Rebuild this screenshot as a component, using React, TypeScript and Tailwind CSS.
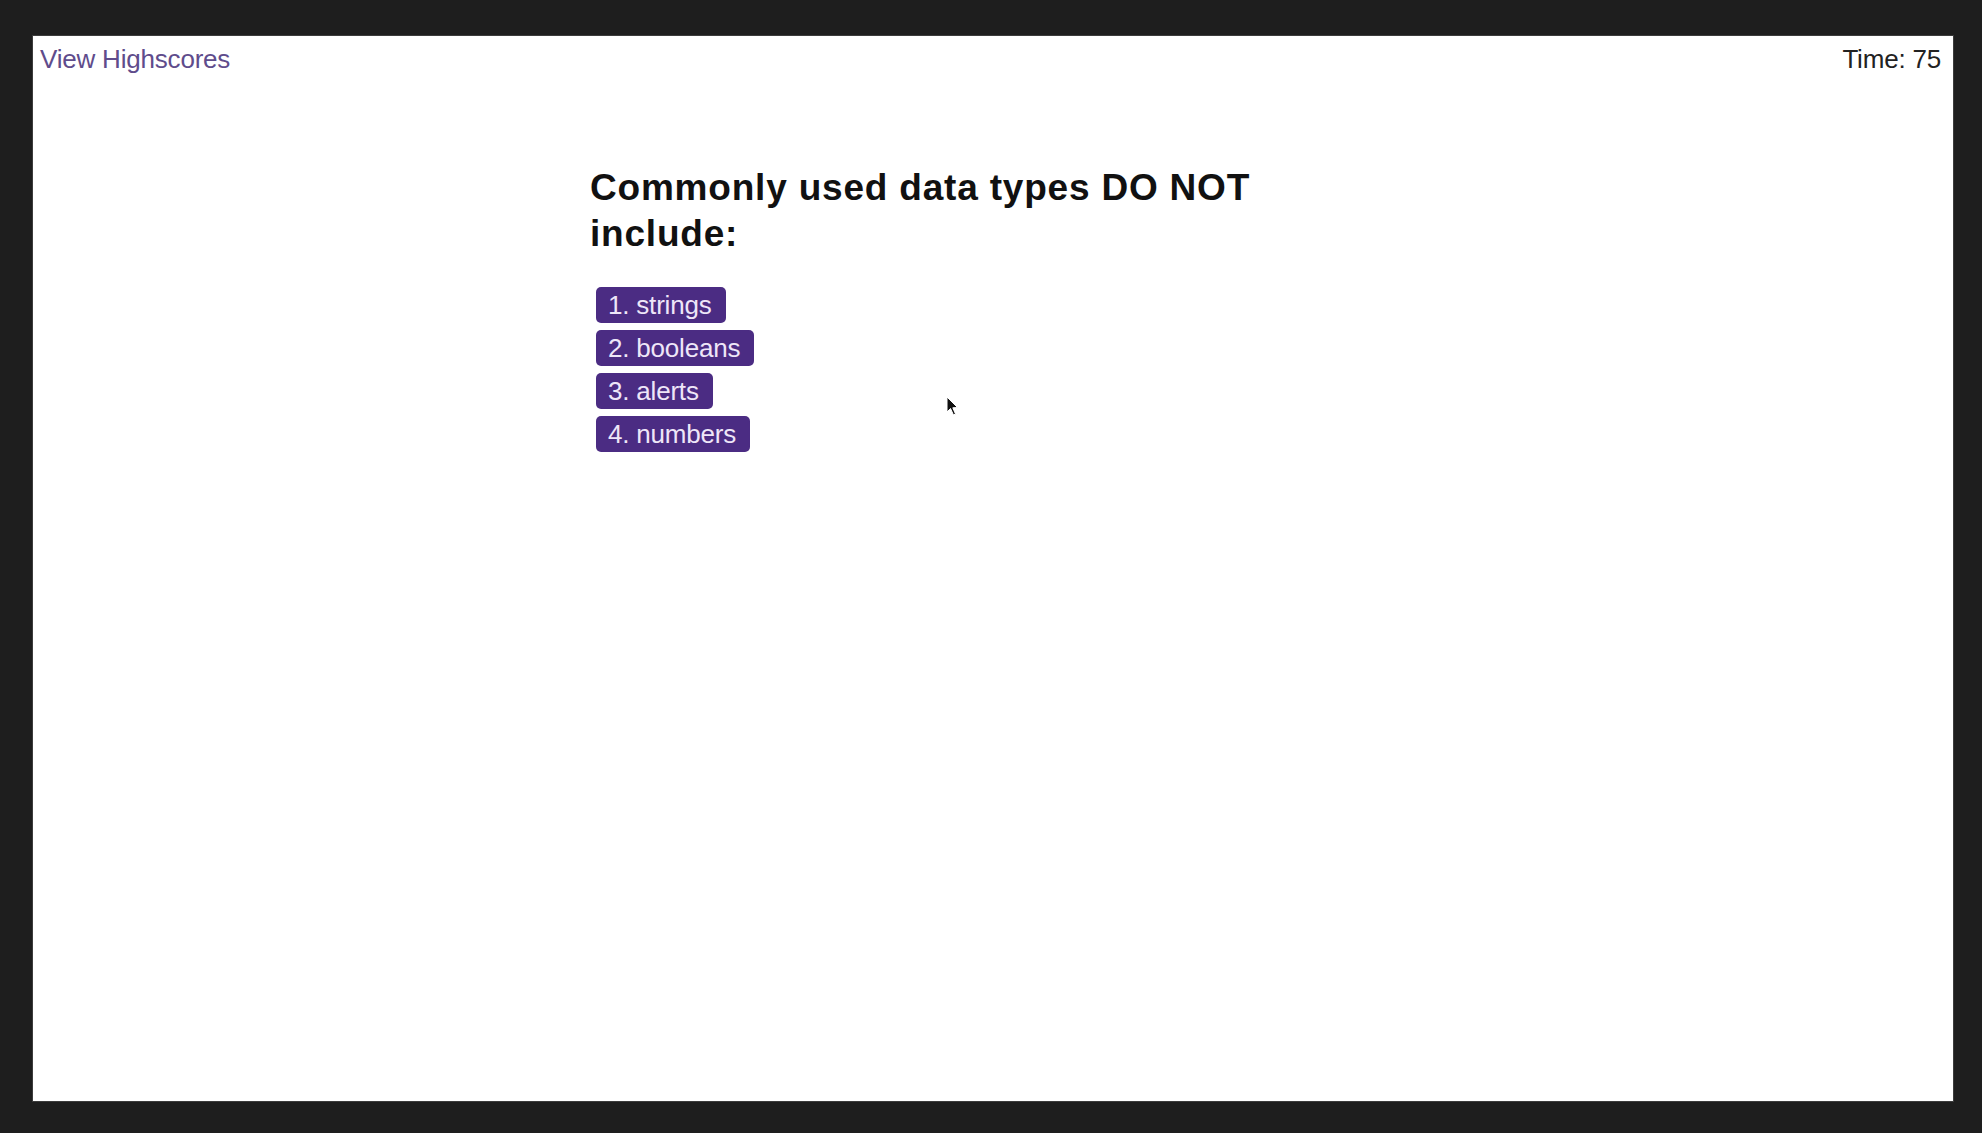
import React from "react";

const choices = ["1. strings", "2. booleans", "3. alerts", "4. numbers"];

const Cursor = () => (
  <svg
    className="absolute left-[913px] top-[360px]"
    width="14"
    height="21"
    viewBox="0 0 14 21"
  >
    <path
      d="M1 1 L1 16 L4.5 12.5 L7.5 19 L9.5 18 L6.8 11.8 L11.5 11.5 Z"
      fill="#111"
      stroke="#fff"
      strokeWidth="1"
    />
  </svg>
);

const App: React.FC = () => {
  return (
    <div
      className="h-[1133px] w-full bg-[#1e1e1e] pl-[32px] pt-[35px] pr-[28px] pb-[31px]"
      style={{ fontFamily: "'Liberation Sans', Arial, sans-serif" }}
    >
      <div className="relative h-full border border-[#3c3c3c] bg-white">
        <header className="flex items-start justify-between pl-[7px] pr-[12px] pt-[8px]">
          <a className="text-[26px] leading-[30px] text-[#5f4c8c] tracking-[-0.2px] cursor-pointer">
            View Highscores
          </a>
          <p className="text-[26px] leading-[30px] text-[#222] tracking-[-0.2px]">
            Time: 75
          </p>
        </header>

        <main className="pl-[557px] pt-[91px]">
          <h1 className="w-[720px] text-[37px] font-bold leading-[46px] text-[#111] tracking-[0.8px]">
            Commonly used data types DO NOT include:
          </h1>
          <ol className="mt-[30px] flex flex-col items-start gap-[7px] pl-[6px]">
            {choices.map((c) => (
              <li key={c}>
                <button className="h-[36px] rounded-[5px] bg-[#4b2c83] pl-[12px] pr-[14px] text-[26px] leading-[36px] text-[#eee6f8] tracking-[-0.2px]">
                  {c}
                </button>
              </li>
            ))}
          </ol>
        </main>

        <Cursor />
      </div>
    </div>
  );
};

export default App;
